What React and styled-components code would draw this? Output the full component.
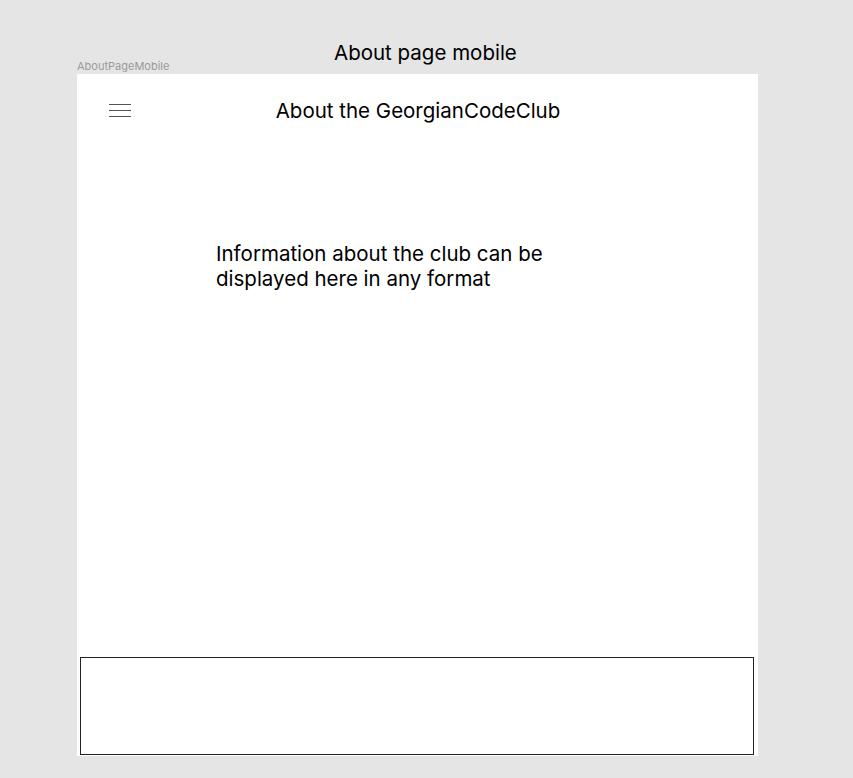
import React from "react";
import styled, { createGlobalStyle } from "styled-components";

const Global = createGlobalStyle`
  html, body { margin: 0; padding: 0; background: #e5e5e5; }
  body { font-family: Inter, "Noto Sans", sans-serif; color: #000; }
`;

const Page = styled.div`
  width: 853px;
  height: 778px;
  background: #e5e5e5;
  display: flex;
  flex-direction: column;
  overflow: hidden;
`;

const PageTitle = styled.div`
  font-size: 20.5px;
  line-height: 24px;
  margin-top: 41px;
  padding-left: 334px;
`;

const FrameLabel = styled.div`
  font-size: 11px;
  line-height: 12px;
  color: #9a9a9a;
  margin: -5px 0 2px 77px;
`;

const Frame = styled.div`
  margin-left: 77px;
  width: 681px;
  height: 682px;
  background: #fff;
  display: flex;
  flex-direction: column;
  box-sizing: border-box;
  padding: 0 4px 1px 3px;
`;

const Header = styled.div`
  display: grid;
  grid-template-columns: 100px 1fr 100px;
  align-items: center;
  height: 74px;
  padding: 0 0 0 29px;
  box-sizing: border-box;
`;

const Burger = styled.div`
  width: 22px;
  display: flex;
  flex-direction: column;
  gap: 5px;
  margin-top: -1px;
  span {
    display: block;
    height: 1.2px;
    background: #555;
  }
`;

const HeaderTitle = styled.div`
  font-size: 20.5px;
  line-height: 24px;
  text-align: center;
  white-space: nowrap;
  margin-left: -27px;
`;

const Content = styled.div`
  flex: 1;
  padding: 93px 0 0 136px;
  font-size: 20.5px;
  line-height: 25px;
`;

const Footer = styled.div`
  height: 98px;
  border: 1px solid #222;
  box-sizing: border-box;
`;

export default function App() {
  return (
    <Page>
      <Global />
      <PageTitle>About page mobile</PageTitle>
      <FrameLabel>AboutPageMobile</FrameLabel>
      <Frame>
        <Header>
          <Burger>
            <span />
            <span />
            <span />
          </Burger>
          <HeaderTitle>About the GeorgianCodeClub</HeaderTitle>
          <div />
        </Header>
        <Content>
          Information about the club can be
          <br />
          displayed here in any format
        </Content>
        <Footer />
      </Frame>
    </Page>
  );
}
